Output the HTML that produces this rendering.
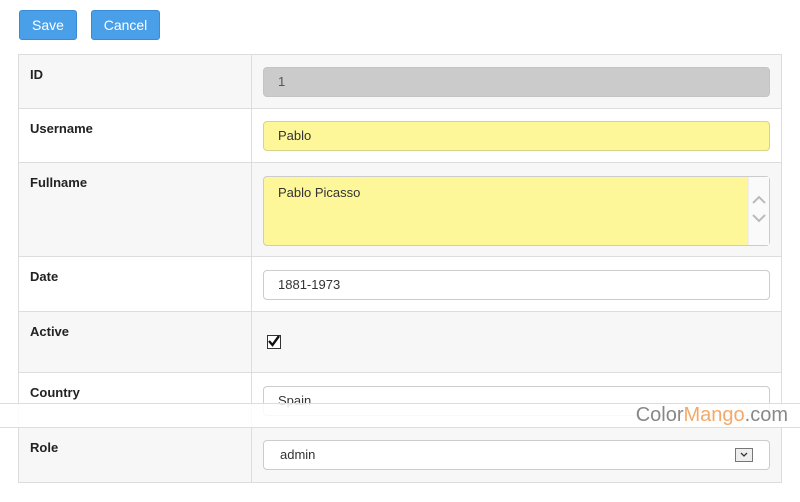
<!DOCTYPE html>
<html><head><style>
body{margin:0;width:800px;height:502px;background:#fff;font-family:"Liberation Sans",sans-serif;position:relative;overflow:hidden}
.btn{position:absolute;top:10px;height:30px;background:#4a9fe9;border:1px solid #3a8ad6;border-radius:3px;color:#fff;font-size:14px;line-height:28px;text-align:center;box-sizing:border-box}
.row{position:absolute;left:18px;width:764px;border:1px solid #ddd;box-sizing:border-box;border-top:none}
.row .l{position:absolute;left:11px;top:12px;font-size:13px;font-weight:bold;color:#222}
.row .d{position:absolute;left:232px;top:0;bottom:0;border-left:1px solid #ddd}
.g{background:#f7f7f7}
.in{position:absolute;left:263px;width:507px;height:30px;box-sizing:border-box;border:1px solid #ccc;border-radius:4px;font-size:13px;color:#333;padding-left:14px;line-height:28px;background:#fff}
</style></head><body>
<div class="btn" style="left:19px;width:58px">Save</div>
<div class="btn" style="left:91px;width:69px">Cancel</div>
<div class="row g" style="top:54px;height:55px;border-top:1px solid #ddd"><div class="l">ID</div><div class="d"></div></div>
<div class="row" style="top:109px;height:54px"><div class="l">Username</div><div class="d"></div></div>
<div class="row g" style="top:163px;height:94px"><div class="l">Fullname</div><div class="d"></div></div>
<div class="row" style="top:257px;height:55px"><div class="l">Date</div><div class="d"></div></div>
<div class="row g" style="top:312px;height:61px"><div class="l">Active</div><div class="d"></div></div>
<div class="row" style="top:373px;height:55px"><div class="l">Country</div><div class="d"></div></div>
<div class="row g" style="top:428px;height:55px"><div class="l">Role</div><div class="d"></div></div>
<div class="in" style="top:67px;background:#cbcbcb;border-color:#c4c4c4;color:#555">1</div>
<div class="in" style="top:121px;background:#fdf79a;border-color:#d8d38a">Pablo</div>
<div class="in" style="top:176px;height:70px;background:#fdf79a;border-color:#ccc;line-height:normal;padding-top:8px">Pablo Picasso
<div style="position:absolute;right:0;top:0;bottom:0;width:20px;background:#fafafa;border-left:1px solid #eee">
<svg width="20" height="68" viewBox="0 0 20 68" style="position:absolute;left:0;top:0"><path d="M4 26 L10 20 L16 26 M4 38 L10 44 L16 38" fill="none" stroke="#bbb" stroke-width="2"/></svg></div></div>
<div class="in" style="top:270px">1881-1973</div>
<div style="position:absolute;left:267px;top:335px;width:14px;height:14px;border:1px solid #333;background:#fff;box-sizing:border-box"><svg width="14" height="14" viewBox="0 0 14 14" style="position:absolute;left:-1px;top:-2px"><path d="M2 7 L5.5 11 L12 2" fill="none" stroke="#111" stroke-width="2.4"/></svg></div>
<div class="in" style="top:386px">Spain</div>
<div class="in" style="top:440px;padding-left:16px">admin<div style="position:absolute;right:16px;top:7px;width:18px;height:14px;border:1px solid #777;background:#eee;box-sizing:border-box"><svg width="16" height="12" viewBox="0 0 16 12" style="position:absolute;left:0;top:0"><path d="M5 4 L8 7 L11 4" fill="none" stroke="#333" stroke-width="1.3"/></svg></div></div>
<div style="position:absolute;left:0;top:403px;width:800px;height:25px;background:rgba(255,255,255,0.85);border-top:1px solid #ddd;border-bottom:1px solid #ddd;box-sizing:border-box"></div>
<div style="position:absolute;right:12px;top:402px;font-size:20px;color:#888;line-height:26px">Color<span style="color:#f4a96a">Mango</span>.com</div>
</body></html>
